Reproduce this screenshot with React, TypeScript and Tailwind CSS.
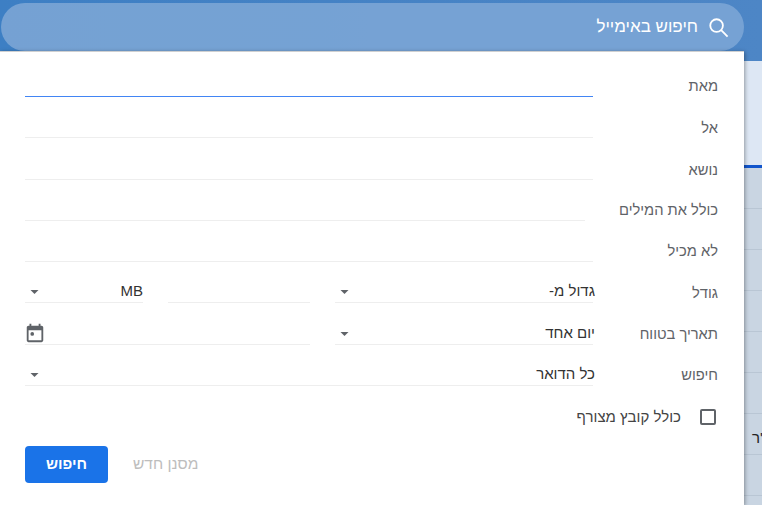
const labelCls = "w-[151px] shrink-0 pr-[26px] text-[14.7px] leading-[20px] text-[#5f6368]";

function Caret() {
  return (
    <svg width="9" height="4" viewBox="0 0 10 5" className="mr-[1px] mt-[1px] shrink-0">
      <path d="M0 0h10L5 5z" fill="#5f6368" />
    </svg>
  );
}

function TextRow({ label, height, line = "border-[#eeeeee]", inset = "", lift = "pb-[1px]" }: { label: string; height: string; line?: string; inset?: string; lift?: string }) {
  return (
    <div className={`flex items-end ${height}`}>
      <div className={`${labelCls} ${lift}`}>{label}</div>
      <div className={`flex-1 ${inset} h-full border-b ${line}`} />
    </div>
  );
}

function SelectField({ text, width, shift = "-mr-[2px]" }: { text: string; width: string; shift?: string }) {
  return (
    <div className={`flex ${width} h-full items-center justify-between border-b border-[#eeeeee] pl-[5px] text-[15px] text-[#333333]`}>
      <span className={shift}>{text}</span>
      <Caret />
    </div>
  );
}

export default function App() {
  return (
    <div dir="rtl" className="relative h-[505px] w-[762px] overflow-hidden bg-[#dce6f3] font-['Liberation_Sans','Roboto',sans-serif]">
      {/* Mailbox behind the panel */}
      <div className="h-[61px] bg-gradient-to-l from-[#4d86c6] to-[#3d7fc4]" />
      <div className="h-[104px] bg-[#dde7f4]" />
      <div className="h-[3px] bg-[#1155cc]" />
      <div className="flex h-[337px] flex-col bg-[#c9d5e2]">
        {[0, 1, 2, 3, 4, 5, 6, 7].map((i) => (
          <div key={i} className="h-[41px] shrink-0 border-b border-[#b9c6d4]" />
        ))}
      </div>
      <span className="absolute left-[752px] top-[427px] whitespace-nowrap text-[15px] text-[#222222]">'ר</span>

      {/* Search pill */}
      <div className="absolute left-[1px] top-[3px] flex h-[48px] w-[743px] items-center rounded-[24px] bg-[#7ba5d5]/90 pr-[14px]">
        <svg width="23" height="23" viewBox="0 0 24 24" fill="none" stroke="#ffffff" strokeWidth="1.9" className="shrink-0">
          <circle cx="10" cy="10" r="6.6" />
          <path d="M14.8 14.8L21.5 21.5" />
        </svg>
        <span className="mr-[9px] text-[17px] text-white">חיפוש באימייל</span>
      </div>

      {/* Advanced search panel */}
      <div className="absolute left-0 top-[51px] flex h-[454px] w-[744px] flex-col border-t border-[#d0d0d0] bg-white pl-[25px] shadow-[1px_1px_4px_rgba(0,0,0,0.35)]">
        <TextRow label="מאת" height="h-[45px]" line="border-[#4285f4]" />
        <TextRow label="אל" height="h-[41px]" lift="pb-0" />
        <TextRow label="נושא" height="h-[42px]" lift="pb-0" />
        <TextRow label="כולל את המילים" height="h-[41px]" inset="mr-[8px]" />
        <TextRow label="לא מכיל" height="h-[41px]" />

        <div className="flex h-[41px] items-end">
          <div className={labelCls}>גודל</div>
          <div className="flex h-full flex-1 pt-[19px]">
            <SelectField text="גדול מ-" width="w-[258px]" />
            <div className="mr-[25px] h-full w-[142px] border-b border-[#eeeeee]" />
            <div className="mr-[25px] flex-1">
              <SelectField text="MB" width="w-[118px]" shift="mr-0" />
            </div>
          </div>
        </div>

        <div className="flex h-[42px] items-end">
          <div className={`${labelCls} pb-[1px]`}>תאריך בטווח</div>
          <div className="flex h-full flex-1 pt-[19px]">
            <SelectField text="יום אחד" width="w-[258px]" />
            <div className="mr-[25px] flex h-full w-[285px] items-center justify-end border-b border-[#eeeeee]">
              <svg width="22" height="22" viewBox="0 0 24 24" fill="#5f6368" className="-ml-[1px] shrink-0">
                <path d="M19 4h-1V2h-2v2H8V2H6v2H5c-1.1 0-2 .9-2 2v14c0 1.1.9 2 2 2h14c1.1 0 2-.9 2-2V6c0-1.1-.9-2-2-2zm0 16H5V9h14v11z" />
                <rect x="7" y="11" width="4" height="4" rx="2" />
              </svg>
            </div>
          </div>
        </div>

        <div className="flex h-[41px] items-end">
          <div className={`${labelCls} pb-[1px]`}>חיפוש</div>
          <div className="flex h-full flex-1 pt-[19px]">
            <SelectField text="כל הדואר" width="w-full" />
          </div>
        </div>

        <div className="mt-[20px] flex items-center pr-[28px]">
          <span className="h-[16px] w-[16px] rounded-[2px] border-2 border-[#5f6368]" />
          <span className="mr-[19px] text-[15px] text-[#444444]">כולל קובץ מצורף</span>
        </div>

        <div className="mt-[17px] flex items-center" dir="ltr">
          <button className="flex h-[37px] w-[83px] items-center justify-center rounded-[4px] bg-[#1a73e8] text-[15px] font-bold text-white">חיפוש</button>
          <span className="ml-[25px] text-[15.5px] text-[#bdbdbd]">מסנן חדש</span>
        </div>
      </div>
    </div>
  );
}
